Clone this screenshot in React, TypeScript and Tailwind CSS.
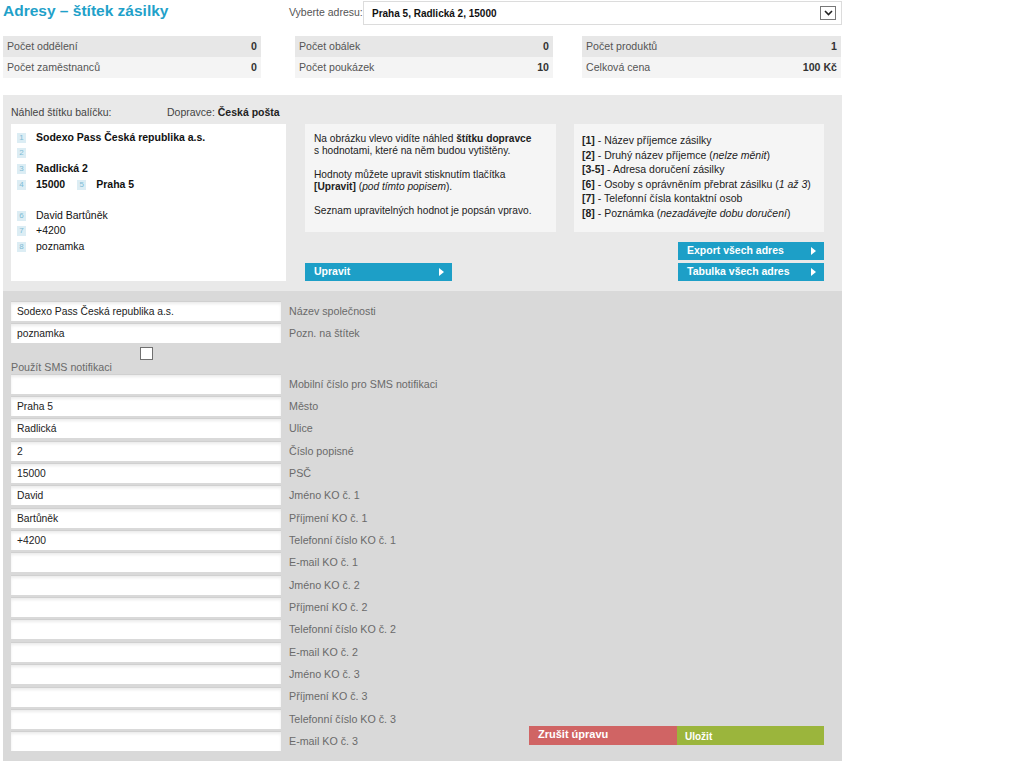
import React from "react";

const stats = [
  [
    ["Počet oddělení", "0"],
    ["Počet zaměstnanců", "0"],
  ],
  [
    ["Počet obálek", "0"],
    ["Počet poukázek", "10"],
  ],
  [
    ["Počet produktů", "1"],
    ["Celková cena", "100 Kč"],
  ],
];

const fieldsTop = [
  ["Sodexo Pass Česká republika a.s.", "Název společnosti"],
  ["poznamka", "Pozn. na štítek"],
];

const fields = [
  ["", "Mobilní číslo pro SMS notifikaci"],
  ["Praha 5", "Město"],
  ["Radlická", "Ulice"],
  ["2", "Číslo popisné"],
  ["15000", "PSČ"],
  ["David", "Jméno KO č. 1"],
  ["Bartůněk", "Příjmení KO č. 1"],
  ["+4200", "Telefonní číslo KO č. 1"],
  ["", "E-mail KO č. 1"],
  ["", "Jméno KO č. 2"],
  ["", "Příjmení KO č. 2"],
  ["", "Telefonní číslo KO č. 2"],
  ["", "E-mail KO č. 2"],
  ["", "Jméno KO č. 3"],
  ["", "Příjmení KO č. 3"],
  ["", "Telefonní číslo KO č. 3"],
  ["", "E-mail KO č. 3"],
];

const Badge = ({ n }: { n: string }) => (
  <span className="inline-flex w-[9px] h-[10px] items-center justify-center bg-[#dcedf4] text-[#7fbcd4] text-[8px] leading-none mr-[10px] font-normal">
    {n}
  </span>
);

const Arrow = () => (
  <svg width="5" height="8" viewBox="0 0 5 8" className="fill-white">
    <path d="M0 0l5 4-5 4z" />
  </svg>
);

const BlueButton = ({ label, className }: { label: string; className?: string }) => (
  <div
    className={`h-[18px] bg-[#1d9fc7] text-white font-bold text-[10.5px] flex items-center justify-between pl-[9px] pr-[8px] ${className ?? ""}`}
  >
    <span>{label}</span>
    <Arrow />
  </div>
);

const FieldRow = ({ value, label }: { value: string; label: string }) => (
  <div className="h-[22.35px] flex items-start">
    <div className="w-[270px] h-[20px] bg-white border-t border-[#d0d0d0] shadow-[inset_0_2px_3px_rgba(0,0,0,0.08)] text-[10.3px] text-[#222] pl-[6px] flex items-center">
      {value}
    </div>
    <div className="pl-[8px] h-[20px] flex items-center text-[10.7px] text-[#6a6a6a]">{label}</div>
  </div>
);

const Line = ({ children, bold }: { children?: React.ReactNode; bold?: boolean }) => (
  <div className={`h-[15.6px] flex items-center ${bold ? "font-bold" : ""}`}>{children}</div>
);

export default function App() {
  return (
    <div className="w-[1023px] min-h-[761px] bg-white font-['Liberation_Sans',Arial,sans-serif] text-[#333]">
      <div className="w-[842px] pl-[3px]">
        {/* header */}
        <div className="flex items-start h-[36px]">
          <h1 className="w-[286px] pt-[1px] text-[15.5px] font-bold text-[#1fa1c9] leading-[20px]">
            Adresy – štítek zásilky
          </h1>
          <div className="flex items-center pt-[1px]">
            <span className="text-[10.5px] text-[#555] w-[74px] whitespace-nowrap">Vyberte adresu:</span>
            <div className="w-[479px] h-[24px] border border-[#dcdcdc] bg-white flex items-center justify-between pl-[8px] pr-[5px]">
              <span className="text-[10px] font-bold text-[#111]">Praha 5, Radlická 2, 15000</span>
              <span className="w-[16px] h-[14px] border border-[#777] flex items-center justify-center">
                <svg width="9" height="6" viewBox="0 0 9 6">
                  <path d="M1 1l3.5 3.5L8 1" stroke="#222" strokeWidth="1.6" fill="none" />
                </svg>
              </span>
            </div>
          </div>
        </div>

        {/* stats */}
        <div className="flex">
          {stats.map((col, ci) => (
            <div
              key={ci}
              className={
                ci === 0 ? "w-[258px]" : ci === 1 ? "w-[258px] ml-[34px]" : "w-[259px] ml-[29px]"
              }
            >
              {col.map(([k, v], ri) => (
                <div
                  key={k}
                  className={`h-[21px] flex items-center justify-between px-[4px] text-[10.6px] ${
                    ri === 0 ? "bg-[#e7e7e7]" : "bg-[#f4f4f4]"
                  }`}
                >
                  <span className="text-[#555]">{k}</span>
                  <span className="font-bold text-[#333]">{v}</span>
                </div>
              ))}
            </div>
          ))}
        </div>

        {/* panel */}
        <div className="mt-[17px] w-[839px]">
          <div className="bg-[#e9e9e9] px-[8px] pt-[6px] h-[196px]">
            <div className="flex text-[10.5px] h-[23px] items-center text-[#444]">
              <span className="w-[156px]">Náhled štítku balíčku:</span>
              <span>
                Dopravce: <b className="text-[#222]">Česká pošta</b>
              </span>
            </div>
            <div className="flex">
              {/* label preview */}
              <div className="w-[275px] h-[157px] bg-white pt-[6px] pl-[6px] text-[10.5px] text-[#111]">
                <Line bold>
                  <Badge n="1" />
                  Sodexo Pass Česká republika a.s.
                </Line>
                <Line>
                  <Badge n="2" />
                </Line>
                <Line bold>
                  <Badge n="3" />
                  Radlická 2
                </Line>
                <Line bold>
                  <Badge n="4" />
                  <span className="mr-[12px]">15000</span>
                  <Badge n="5" />
                  Praha 5
                </Line>
                <Line />
                <Line>
                  <Badge n="6" />
                  David Bartůněk
                </Line>
                <Line>
                  <Badge n="7" />
                  +4200
                </Line>
                <Line>
                  <Badge n="8" />
                  poznamka
                </Line>
              </div>

              {/* info */}
              <div className="ml-[19px] w-[251px]">
                <div className="h-[108px] bg-[#f5f5f5] pt-[9px] pl-[9px] pr-[4px] text-[10.2px] leading-[12px] text-[#222]">
                  <p>
                    Na obrázku vlevo vidíte náhled <b>štítku dopravce</b>
                    <br />s hodnotami, které na něm budou vytištěny.
                  </p>
                  <p className="mt-[12px]">
                    Hodnoty můžete upravit stisknutím tlačítka
                    <br />
                    <b>[Upravit]</b> (<i>pod tímto popisem</i>).
                  </p>
                  <p className="mt-[12px]">Seznam upravitelných hodnot je popsán vpravo.</p>
                </div>
                <BlueButton label="Upravit" className="mt-[31px] w-[147px]" />
              </div>

              {/* legend */}
              <div className="ml-[18px] w-[250px]">
                <div className="h-[108px] bg-[#f5f5f5] pt-[9px] pl-[8px] text-[10.5px] leading-[14.6px] text-[#222]">
                  <div>
                    <b>[1]</b> - Název příjemce zásilky
                  </div>
                  <div>
                    <b>[2]</b> - Druhý název příjemce (<i>nelze měnit</i>)
                  </div>
                  <div>
                    <b>[3-5]</b> - Adresa doručení zásilky
                  </div>
                  <div>
                    <b>[6]</b> - Osoby s oprávněním přebrat zásilku (<i>1 až 3</i>)
                  </div>
                  <div>
                    <b>[7]</b> - Telefonní čísla kontaktní osob
                  </div>
                  <div>
                    <b>[8]</b> - Poznámka (<i>nezadávejte dobu doručení</i>)
                  </div>
                </div>
                <div className="flex flex-col items-end mt-[10px] gap-[3px]">
                  <BlueButton label="Export všech adres" className="w-[146px]" />
                  <BlueButton label="Tabulka všech adres" className="w-[146px]" />
                </div>
              </div>
            </div>
          </div>

          {/* form */}
          <div className="bg-[#d9d9d9] pl-[8px] pr-[18px] pt-[10px] pb-[10px] flex">
            <div className="w-[480px]">
              {fieldsTop.map(([v, l]) => (
                <FieldRow key={l} value={v} label={l} />
              ))}
              <div className="w-[270px] flex justify-center pl-[1px] pt-[1px]">
                <span className="w-[13px] h-[13px] border border-[#707070] bg-white" />
              </div>
              <div className="h-[14px] text-[10.7px] text-[#6a6a6a] leading-[14px]">Použít SMS notifikaci</div>
              {fields.map(([v, l]) => (
                <FieldRow key={l} value={v} label={l} />
              ))}
            </div>
            <div className="ml-auto self-end flex mb-[9px]">
              <div className="w-[148px] h-[19px] bg-[#d06464] text-white font-bold text-[11px] pl-[9px] leading-[17px]">
                Zrušit úpravu
              </div>
              <div className="w-[147px] h-[19px] bg-[#9bb53c] text-white font-bold text-[10px] pl-[8px] leading-[22px]">
                Uložit
              </div>
            </div>
          </div>
        </div>
      </div>
    </div>
  );
}
